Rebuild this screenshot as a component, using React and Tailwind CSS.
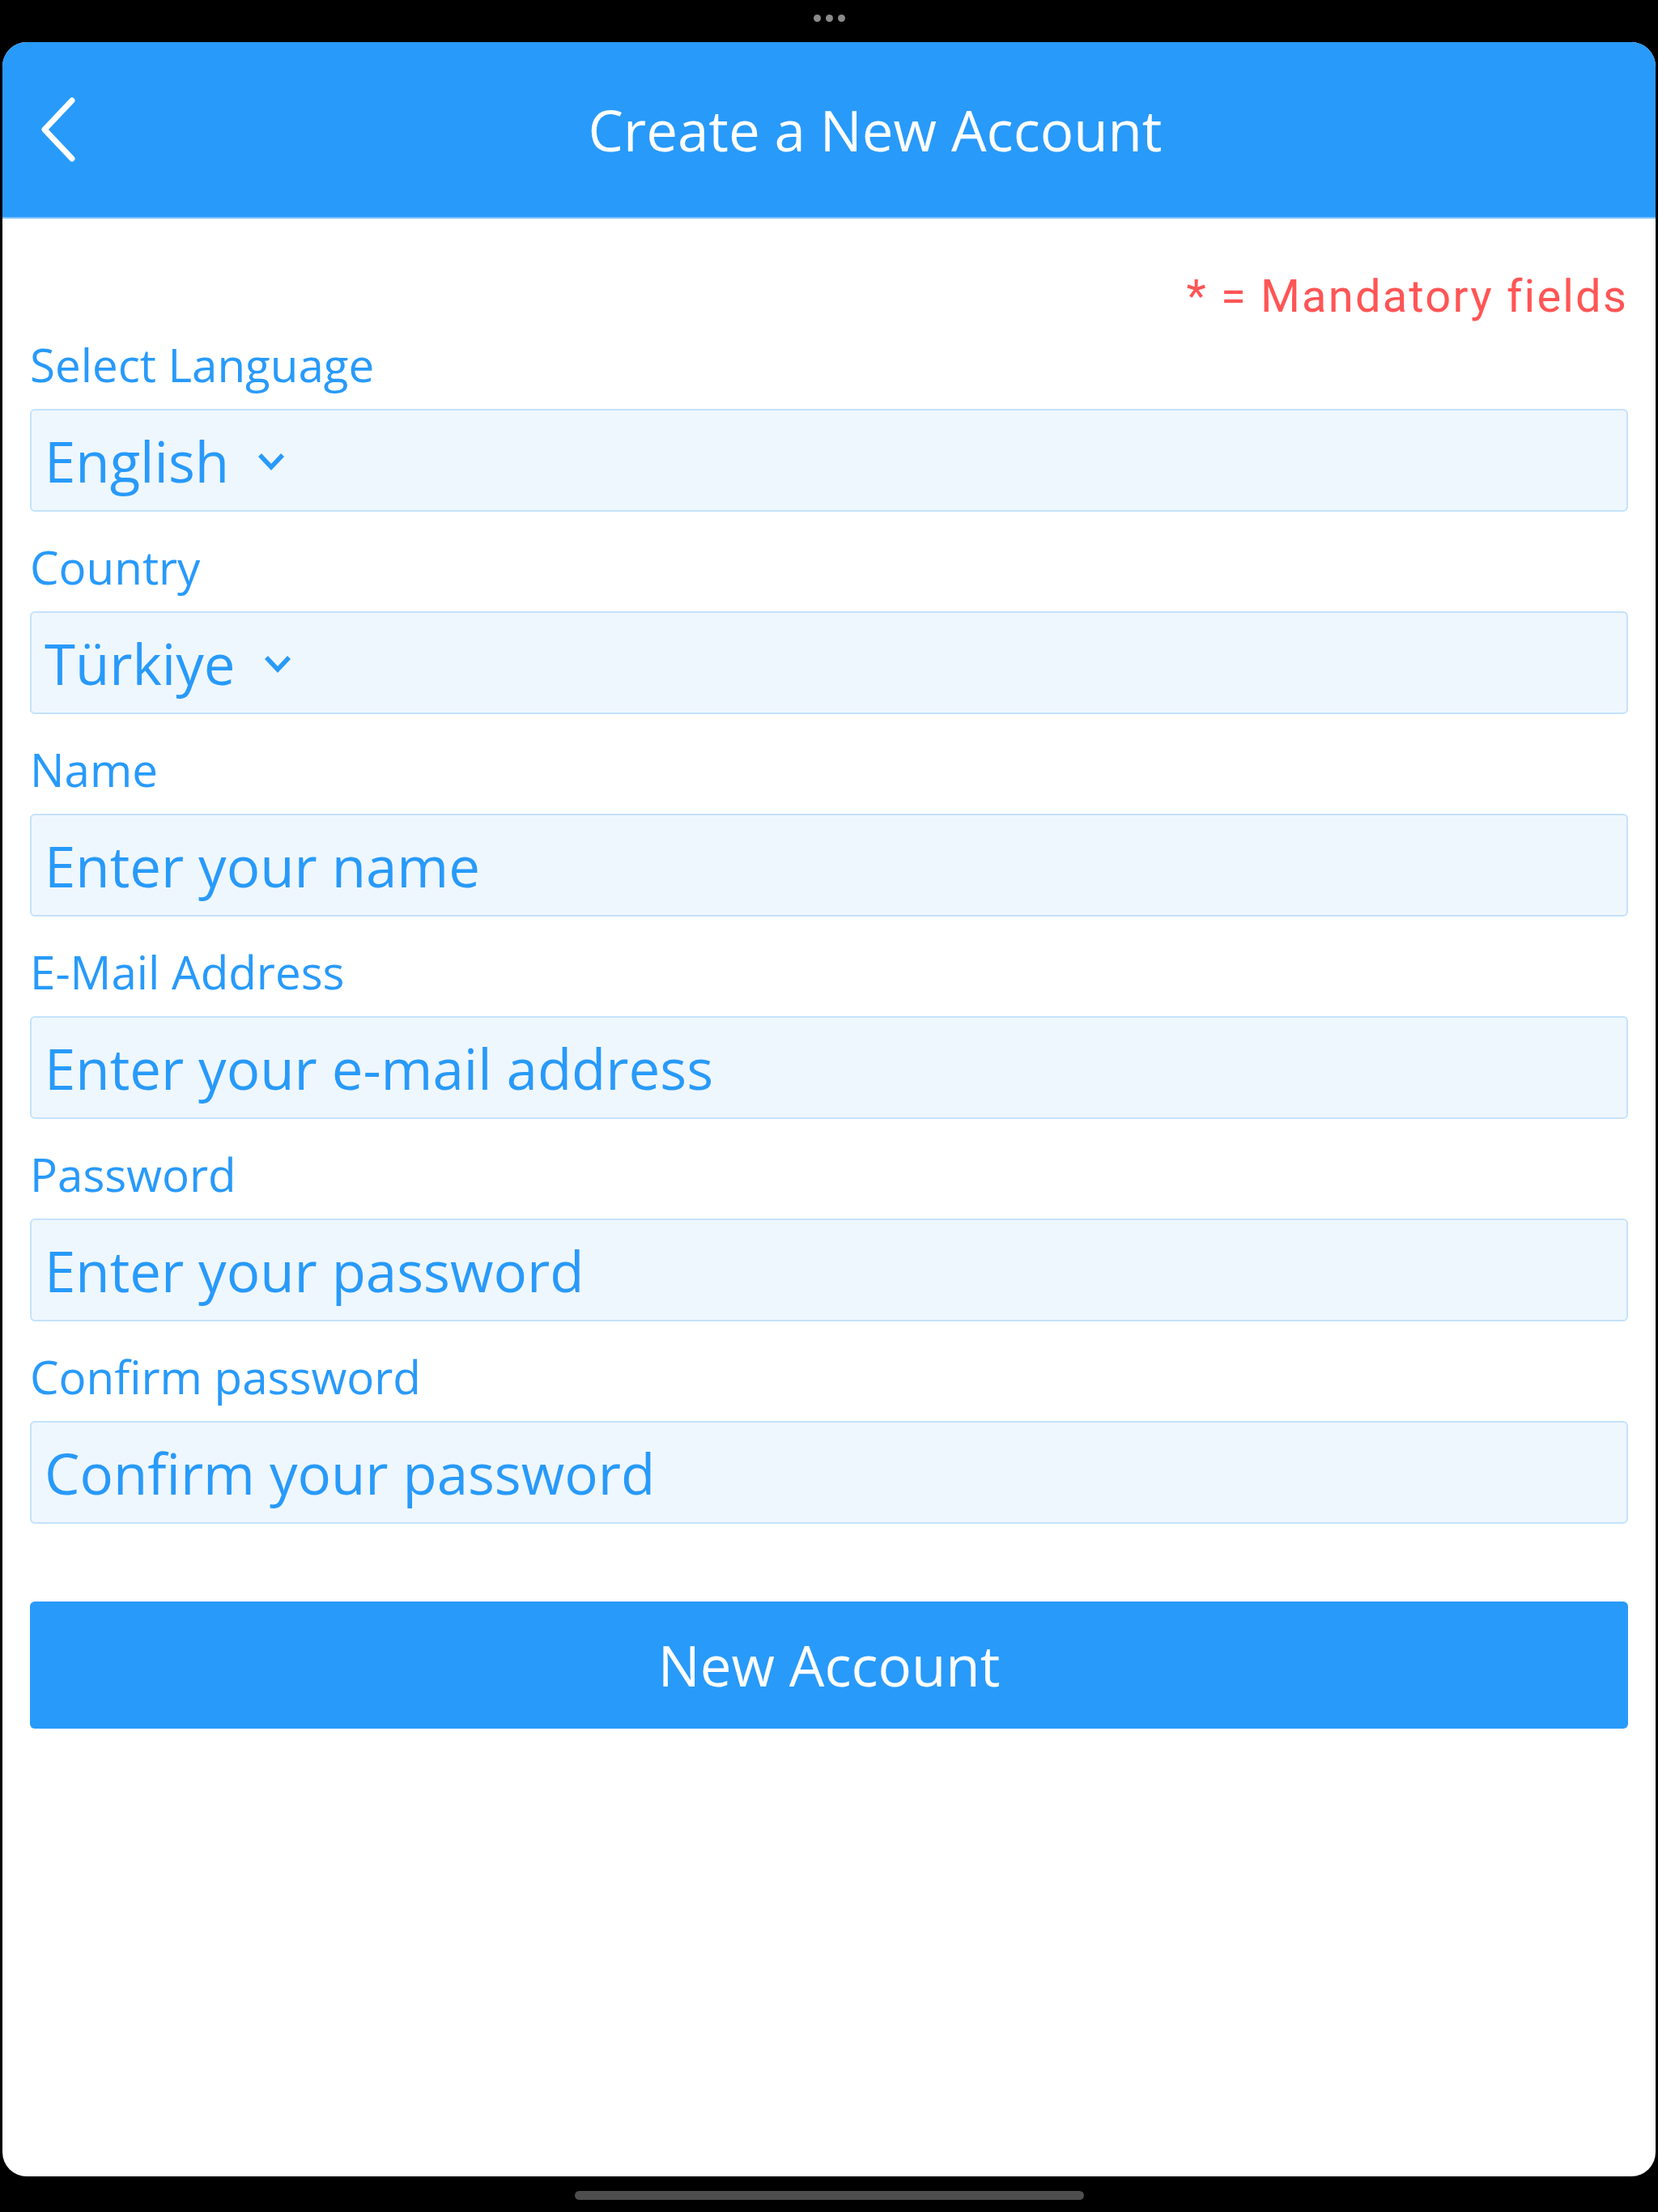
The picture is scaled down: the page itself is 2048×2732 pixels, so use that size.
import React from 'react'

const fields = [
  { label: 'Select Language', value: 'English', select: true },
  { label: 'Country', value: 'Türkiye', select: true },
  { label: 'Name', value: 'Enter your name' },
  { label: 'E-Mail Address', value: 'Enter your e-mail address' },
  { label: 'Password', value: 'Enter your password' },
  { label: 'Confirm password', value: 'Confirm your password' },
]

function Chevron() {
  return (
    <svg width="36" height="26" viewBox="0 0 36 26" className="ml-[34px] mt-[2px]">
      <path d="M4 5 L18 20 L32 5" fill="none" stroke="#289afa" strokeWidth="5.5" strokeLinecap="butt" />
    </svg>
  )
}

function Field({ label, value, select }) {
  return (
    <div className="flex flex-col">
      <div className="text-[56.5px] leading-[56px] text-[#289afa]">{label}</div>
      <div className="mt-[26px] h-[127px] flex items-center rounded-[6px] border-2 border-[#c4e2fc] bg-[#eff7fe] pl-[16px]">
        <span className="text-[69px] leading-[70px] text-[#289afa]">{value}</span>
        {select && <Chevron />}
      </div>
    </div>
  )
}

export default function App() {
  return (
    <div className="w-[2048px] h-[2732px] bg-black flex flex-col font-['Open_Sans',sans-serif]">
      <div className="h-[52px] flex items-center justify-center gap-[6px] pb-[8px]">
        <div className="w-[9px] h-[9px] rounded-full bg-[#8a8a8a]" />
        <div className="w-[9px] h-[9px] rounded-full bg-[#8a8a8a]" />
        <div className="w-[9px] h-[9px] rounded-full bg-[#8a8a8a]" />
      </div>

      <div className="mx-[3px] h-[2636px] bg-white rounded-[30px] overflow-hidden flex flex-col">
        <div className="h-[218px] bg-[#289afa] border-b-2 border-[#7cc2fc] flex items-center">
          <div className="w-[114px] flex items-center pl-[46px]">
            <svg width="48" height="80" viewBox="0 0 48 80">
              <path d="M40 4 L6 40 L40 76" fill="none" stroke="#fff" strokeWidth="7" strokeLinecap="round" strokeLinejoin="round" />
            </svg>
          </div>
          <div className="flex-1 text-center text-white text-[69px] leading-[70px]">Create a New Account</div>
        </div>

        <div className="px-[34px] pt-[68px] flex flex-col">
          <div className="text-right text-[56px] leading-[56px] text-[#ff5555] font-['Roboto',sans-serif] tracking-[2.2px]">
            * = Mandatory fields
          </div>
          <div className="mt-[29px] flex flex-col gap-[41px]">
            {fields.map(f => (
              <Field key={f.label} {...f} />
            ))}
          </div>
          <button className="mt-[96px] h-[157px] rounded-[6px] bg-[#289afa] text-white text-[69px] leading-[67px] font-['Open_Sans',sans-serif]">
            New Account
          </button>
        </div>
      </div>

      <div className="flex-1 flex justify-center pt-[18px]">
        <div className="w-[629px] h-[11px] rounded-full bg-[#4d4d4d]" />
      </div>
    </div>
  )
}
